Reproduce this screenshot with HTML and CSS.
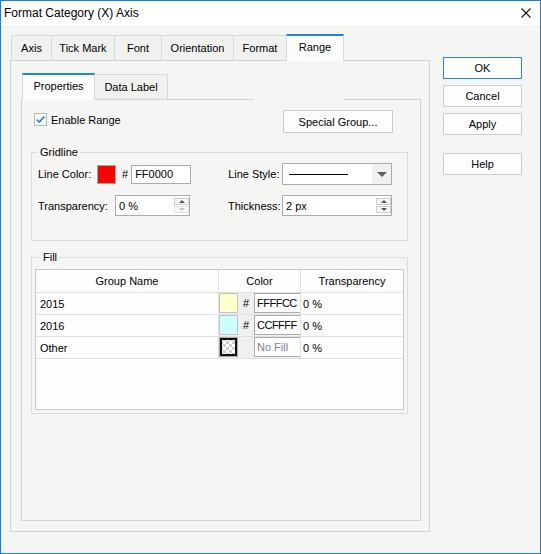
FILE: index.html
```html
<!DOCTYPE html>
<html>
<head>
<meta charset="utf-8">
<title>Format Category (X) Axis</title>
<link rel="stylesheet" href="styles.css">
</head>
<body>
<div class="window">
  <div class="titlebar">
    <span class="title">Format Category (X) Axis</span>
    <svg class="close" width="10" height="10" viewBox="0 0 10 10"><path d="M0.5 0.5 L9.5 9.5 M9.5 0.5 L0.5 9.5" stroke="#111" stroke-width="1.1" fill="none"/></svg>
  </div>
  <div class="body">
    <div class="main">
      <div class="tabs outer-tabs">
        <div class="tab w-axis">Axis</div>
        <div class="tab w-tick">Tick Mark</div>
        <div class="tab w-font">Font</div>
        <div class="tab w-orient">Orientation</div>
        <div class="tab w-format">Format</div>
        <div class="tab active w-range">Range</div>
      </div>
      <div class="panel outer-panel">
        <div class="tabs inner-tabs">
          <div class="tab active w-props">Properties</div>
          <div class="tab w-dl">Data Label</div>
        </div>
        <div class="panel inner-panel">
          <div class="enable-row">
            <div class="check">
              <span class="box"><svg width="11" height="11" viewBox="0 0 11 11"><path d="M1.8 5.6 L4.3 8.1 L9.4 2.6" stroke="#2586d8" stroke-width="1.7" fill="none"/></svg></span>
              <span>Enable Range</span>
            </div>
            <div class="btn special">Special Group...</div>
          </div>

          <fieldset class="group gridline">
            <legend>Gridline</legend>
            <div class="grid-body">
              <div class="row r1">
                <span class="lbl w59">Line Color:</span>
                <span class="swatch red"></span>
                <span class="hash">#</span>
                <span class="input w60">FF0000</span>
                <span class="lbl w54 right-block">Line Style:</span>
                <div class="select">
                  <span class="sel-line"></span>
                  <span class="sel-arrow"><span class="tri-down big"></span></span>
                </div>
              </div>
              <div class="row r2">
                <span class="lbl w77">Transparency:</span>
                <div class="spin w75">
                  <span class="spin-val">0 %</span>
                  <span class="spin-btns">
                    <span class="sbtn"><span class="tri-up"></span></span>
                    <span class="sbtn disabled"><span class="tri-down"></span></span>
                  </span>
                </div>
                <span class="lbl w54 right-block2">Thickness:</span>
                <div class="spin w110">
                  <span class="spin-val">2 px</span>
                  <span class="spin-btns">
                    <span class="sbtn"><span class="tri-up"></span></span>
                    <span class="sbtn"><span class="tri-down"></span></span>
                  </span>
                </div>
              </div>
            </div>
          </fieldset>

          <fieldset class="group fill">
            <legend>Fill</legend>
            <div class="table">
              <div class="thead">
                <div class="th">Group Name</div>
                <div class="th">Color</div>
                <div class="th last">Transparency</div>
              </div>
              <div class="trow">
                <div class="td name">2015</div>
                <div class="td color">
                  <span class="cswatch" style="background:#ffffcc"></span>
                  <span class="chash">#</span>
                  <span class="cinput">FFFFCC</span>
                </div>
                <div class="td trans last">0 %</div>
              </div>
              <div class="trow">
                <div class="td name">2016</div>
                <div class="td color">
                  <span class="cswatch" style="background:#ccffff"></span>
                  <span class="chash">#</span>
                  <span class="cinput">CCFFFF</span>
                </div>
                <div class="td trans last">0 %</div>
              </div>
              <div class="trow">
                <div class="td name">Other</div>
                <div class="td color">
                  <span class="cswatch checker"></span>
                  <span class="chash"></span>
                  <span class="cinput nofill">No Fill</span>
                </div>
                <div class="td trans last">0 %</div>
              </div>
            </div>
          </fieldset>
        </div>
      </div>
    </div>
    <div class="buttons">
      <div class="btn dlg default">OK</div>
      <div class="btn dlg">Cancel</div>
      <div class="btn dlg">Apply</div>
      <div class="btn dlg help">Help</div>
    </div>
  </div>
</div>
</body>
</html>
```

FILE: styles.css
```css
* { box-sizing: border-box; }
html, body { margin: 0; padding: 0; }
body {
  font-family: "Liberation Sans", Arial, sans-serif;
  font-size: 11px;
  color: #000;
  background: #fff;
}
.window {
  width: 541px;
  height: 554px;
  border: 1px solid #1a7fd4;
  background: #f5f5f3;
  display: flex;
  flex-direction: column;
}
.titlebar {
  height: 24px;
  flex: none;
  background: #fff;
  display: flex;
  align-items: center;
  justify-content: space-between;
  padding: 0 9px 0 3px;
  font-size: 12px;
}
.close { display: block; }
.body {
  display: flex;
  padding: 9px 0 0 9px;
}
.main {
  width: 420px;
  display: flex;
  flex-direction: column;
}
.tabs {
  display: flex;
  align-items: flex-end;
  height: 26px;
  flex: none;
}
.outer-tabs, .inner-tabs { padding-left: 1px; }
.tab {
  height: 25px;
  border: 1px solid #d9d9d9;
  border-bottom: none;
  margin-right: -1px;
  display: flex;
  align-items: center;
  justify-content: center;
  background: #f1f1ef;
}
.tab.active {
  height: 27px;
  margin-bottom: -1px;
  border-top: 2px solid #1a86e0;
  background: #fcfcfb;
  position: relative;
  z-index: 1;
  padding-bottom: 3px;
}
.w-axis { width: 41px; }
.w-tick { width: 64px; }
.w-font { width: 48px; }
.w-orient { width: 73px; }
.w-format { width: 54px; }
.w-range { width: 58px; }
.w-props { width: 73px; }
.w-dl { width: 74px; }

.panel { border: 1px solid #d3d3d3; }
.outer-panel {
  height: 472px;
  padding: 12px 8px 10px 10px;
  display: flex;
  flex-direction: column;
}
.inner-panel {
  flex: 1;
  position: relative;
  padding: 10px 12px 0 9px;
}
.inner-panel::after {
  content: "";
  position: absolute;
  top: -1px;
  left: 232px;
  width: 89px;
  height: 1px;
  background: #f5f5f3;
}

.enable-row {
  display: flex;
  justify-content: space-between;
  align-items: flex-start;
  height: 23px;
  padding: 0 15px 0 3px;
}
.check {
  display: flex;
  align-items: center;
  gap: 4px;
  margin-top: 3px;
  height: 13px;
}
.box {
  width: 13px;
  height: 13px;
  border: 1px solid #b8b8b8;
  background: #fff;
  display: block;
}
.box svg { display: block; }

.btn {
  border: 1px solid #cccccc;
  background: #fdfdfd;
  display: flex;
  align-items: center;
  justify-content: center;
}
.special { width: 110px; height: 23px; }

.group {
  margin: 0;
  padding: 0;
  border: 1px solid #dcdcdc;
  min-width: 0;
}
.group legend {
  padding: 0 2px;
  margin-left: 6px;
  line-height: 13px;
}
.gridline { margin-top: 13px; }
.grid-body { padding: 4px 0 24px 6px; }
.row { display: flex; align-items: center; }
.r1 { height: 22px; }
.r2 { height: 21px; margin-top: 10px; }
.lbl { flex: none; white-space: nowrap; }
.w59 { width: 59px; }
.w54 { width: 54px; }
.w77 { width: 77px; }
.right-block { margin-left: 37px; }
.right-block2 { margin-left: 38px; }
.swatch {
  width: 19px;
  height: 19px;
  border: 1px solid #a4a4a4;
  flex: none;
}
.swatch.red { background: #ff0000; }
.hash { margin: 0 3px 0 6px; }
.input {
  height: 19px;
  border: 1px solid #ababab;
  background: #fff;
  padding-left: 3px;
  display: flex;
  align-items: center;
}
.w60 { width: 60px; }
.select {
  width: 110px;
  height: 22px;
  border: 1px solid #ababab;
  background: #fff;
  display: flex;
  align-items: center;
}
.sel-line {
  width: 59px;
  height: 1px;
  margin-left: 6px;
  background: #000;
}
.sel-arrow {
  margin-left: auto;
  width: 19px;
  height: 20px;
  background: #f0f0f0;
  display: flex;
  align-items: center;
  justify-content: center;
}
.tri-down {
  width: 0;
  height: 0;
  border-left: 3px solid transparent;
  border-right: 3px solid transparent;
  border-top: 3px solid #555;
}
.tri-down.big {
  border-left-width: 5px;
  border-right-width: 5px;
  border-top-width: 5px;
  border-top-color: #606060;
}
.tri-up {
  width: 0;
  height: 0;
  border-left: 3px solid transparent;
  border-right: 3px solid transparent;
  border-bottom: 3px solid #555;
}
.spin {
  height: 21px;
  border: 1px solid #ababab;
  background: #fff;
  display: flex;
  align-items: center;
  padding-left: 3px;
}
.w75 { width: 75px; }
.w110 { width: 110px; }
.spin-val { flex: 1; }
.spin-btns {
  display: flex;
  flex-direction: column;
  gap: 1px;
  margin-right: 0;
}
.sbtn {
  width: 15px;
  height: 7px;
  border: 1px solid #cdcdcd;
  background: #f8f8f8;
  display: flex;
  align-items: center;
  justify-content: center;
}
.sbtn.disabled { border-color: #e2e2e2; }
.sbtn.disabled .tri-down { border-top-color: #c4c4c4; }

.fill {
  margin-top: 10px;
  padding: 5px 3px 3px 3px;
}
.table {
  height: 141px;
  border: 1px solid #c8c8c8;
  background: #fdfefd;
}
.thead, .trow {
  display: grid;
  grid-template-columns: 183px 82px 1fr;
}
.thead { height: 23px; }
.trow { height: 22px; }
.th, .td {
  border-right: 1px solid #e0e0e0;
  border-bottom: 1px solid #e0e0e0;
  display: flex;
  align-items: center;
}
.th { justify-content: center; }
.th.last, .td.last { border-right: none; }
.td.name { padding-left: 4px; }
.td.trans { padding-left: 2px; }
.td.color {
  align-items: flex-start;
  background: #f0f0f0;
}
.cswatch {
  width: 19px;
  height: 20px;
  border: 1px solid #c4c4c4;
  flex: none;
}
.cswatch.checker {
  border-color: #a8a8a8;
  box-shadow: inset 0 0 0 2px #111;
  background: repeating-conic-gradient(#d0d0d0 0 25%, #ffffff 0 50%) 0 0 / 6px 6px;
}
.chash {
  width: 16px;
  height: 20px;
  flex: none;
  display: flex;
  align-items: center;
  justify-content: center;
}
.cinput {
  width: 46px;
  height: 20px;
  border: 1px solid #ababab;
  border-right: none;
  background: #fff;
  padding-left: 2px;
  display: flex;
  align-items: center;
  letter-spacing: -0.5px;
  white-space: nowrap;
  overflow: hidden;
}
.cinput.nofill { color: #7c8294; letter-spacing: 0; }

.buttons {
  margin-left: 13px;
  margin-top: 23px;
  display: flex;
  flex-direction: column;
  gap: 6px;
}
.dlg { width: 79px; height: 22px; }
.dlg.default { border-color: #2b88d8; }
.dlg.help { margin-top: 12px; }
```
